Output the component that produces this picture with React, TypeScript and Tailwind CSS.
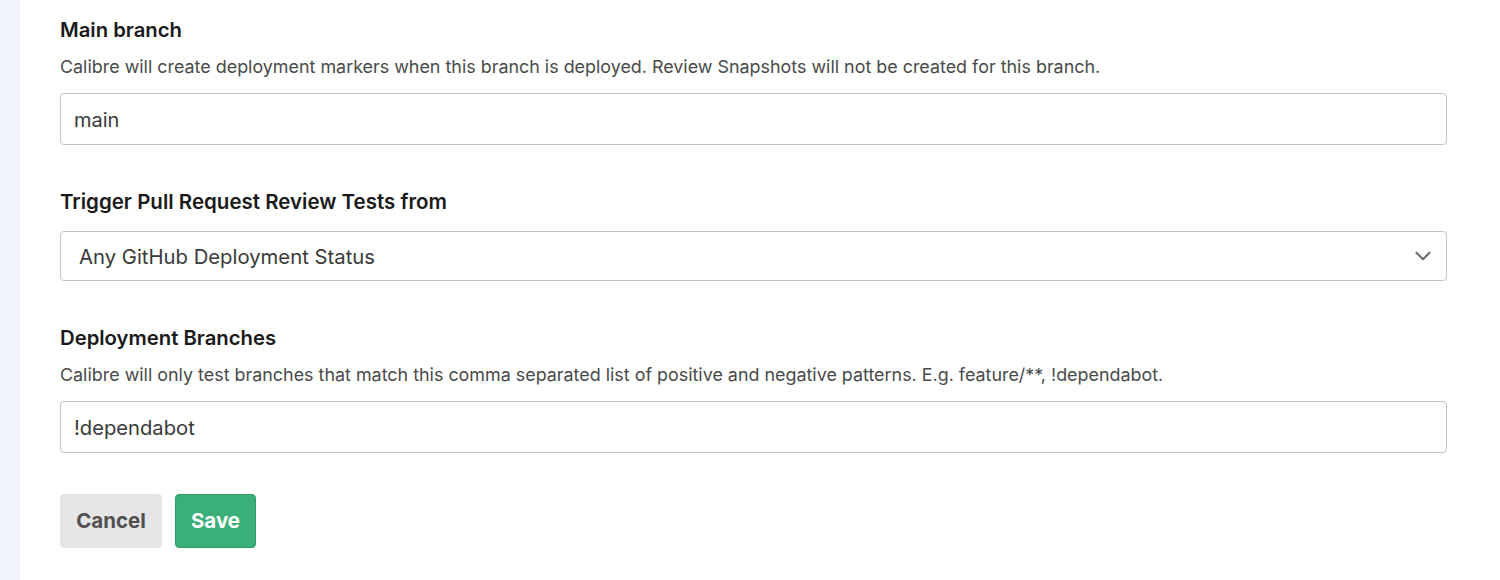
import { ChevronDown } from "lucide-react";

const font = { fontFamily: "Inter, 'Noto Sans', sans-serif" };

export default function App() {
  return (
    <div className="flex h-[580px] w-full bg-white" style={font}>
      <div className="w-[20px] shrink-0 bg-[#f0f3fe]" />
      <div className="flex-1 pl-[40px] pr-[53px] pt-[18px]">
        <h2 className="text-[20.3px] font-semibold leading-[24px] text-[#1a1a1a]">Main branch</h2>
        <p className="mt-[13px] text-[17.9px] leading-[24px] text-[#4a4a4a]">
          Calibre will create deployment markers when this branch is deployed. Review Snapshots will not be created for this branch.
        </p>
        <div className="mt-[14px] flex h-[52px] items-center rounded-[4px] border border-[#c4c4c4] px-[13px] pt-[2px] text-[20px] text-[#3a3a3a]">
          main
        </div>

        <h2 className="mt-[45px] text-[20.5px] font-semibold leading-[24px] text-[#1a1a1a]">
          Trigger Pull Request Review Tests from
        </h2>
        <div className="mt-[17px] flex h-[50px] items-center justify-between rounded-[4px] border border-[#c4c4c4] pl-[18px] pr-[10px] text-[20.3px] text-[#3a3a3a]">
          <span className="pt-[2px]">Any GitHub Deployment Status</span>
          <ChevronDown size={26} strokeWidth={2} className="text-[#6e6e6e]" />
        </div>

        <h2 className="mt-[45px] text-[20.3px] font-semibold leading-[24px] text-[#1a1a1a]">Deployment Branches</h2>
        <p className="mt-[13px] text-[17.9px] leading-[24px] text-[#4a4a4a]">
          Calibre will only test branches that match this comma separated list of positive and negative patterns. E.g. feature/**, !dependabot.
        </p>
        <div className="mt-[14px] flex h-[52px] items-center rounded-[4px] border border-[#c4c4c4] px-[13px] pt-[2px] text-[20.2px] text-[#3a3a3a]">
          !dependabot
        </div>

        <div className="mt-[41px] flex gap-[13px]">
          <button className="h-[54px] w-[102px] rounded-[4px] bg-[#e6e6e6] text-[20.5px] font-bold text-[#505050]">
            Cancel
          </button>
          <button className="h-[54px] w-[81px] rounded-[4px] border border-[#2f9e68] bg-[#3aaf78] text-[20.5px] font-bold text-white">
            Save
          </button>
        </div>
      </div>
    </div>
  );
}
